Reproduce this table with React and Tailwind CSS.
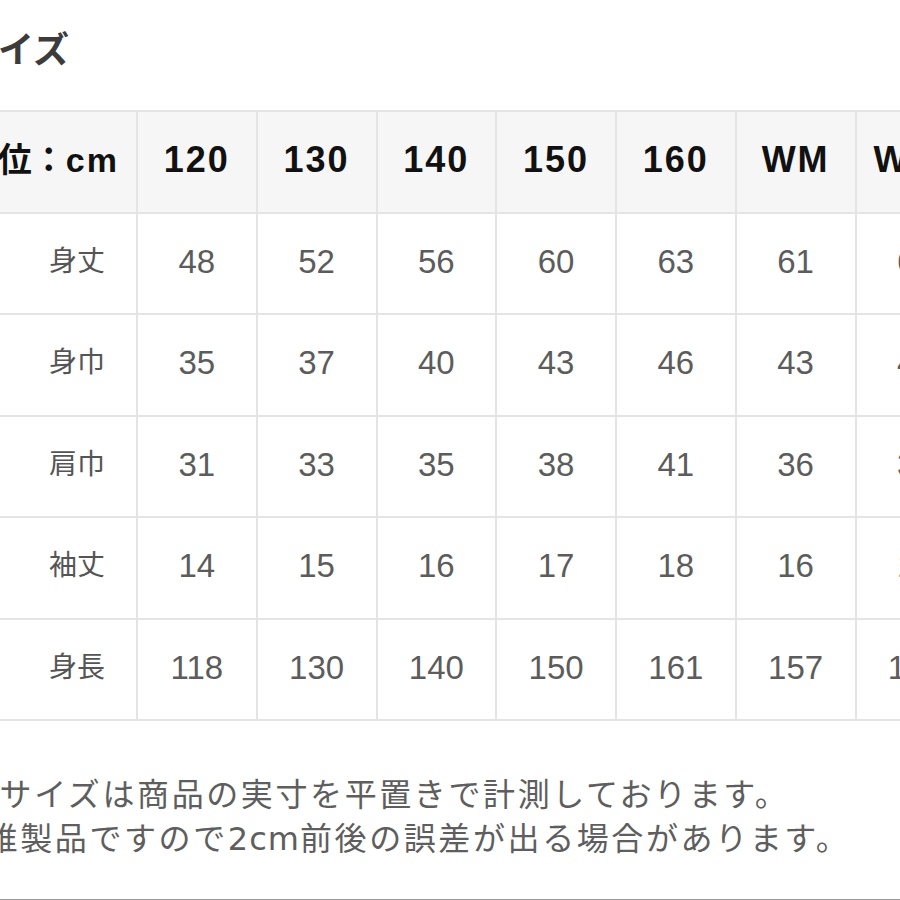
import React from "react";

const sizes = ["120", "130", "140", "150", "160", "WM", "WLL"];
const rows = [
  ["身丈", ["48", "52", "56", "60", "63", "61", "65"]],
  ["身巾", ["35", "37", "40", "43", "46", "43", "46"]],
  ["肩巾", ["31", "33", "35", "38", "41", "36", "38"]],
  ["袖丈", ["14", "15", "16", "17", "18", "16", "17"]],
  ["身長", ["118", "130", "140", "150", "161", "157", "163"]],
];

const font = { fontFamily: '"Liberation Sans", "Noto Sans CJK JP", sans-serif' };

export default function App() {
  return (
    <div
      className="w-[900px] h-[900px] overflow-hidden bg-white border-b border-[#9a9a9a]"
      style={font}
    >
      <div className="ml-[-38px] pt-[27px] text-[36px] font-bold leading-[48px] text-[#3c3c3c] whitespace-nowrap">
        サイズ
      </div>

      <div className="mt-[35px] ml-[-64px] w-max grid grid-cols-[198px_repeat(7,117.75px)] gap-[2px] p-[2px] bg-[#e4e4e4]">
        <div className="h-[99.5px] pb-[3px] bg-[#f6f6f6] flex items-center justify-end pr-[17px] text-[34px] font-bold text-[#111] whitespace-nowrap">
          単位：<span className="tracking-[2px]">cm</span>
        </div>
        {sizes.map((s) => (
          <div
            key={s}
            className="h-[99.5px] pb-[3px] bg-[#f6f6f6] flex items-center justify-center text-[36px] font-bold tracking-[2px] text-[#111] whitespace-nowrap"
          >
            {s}
          </div>
        ))}
        {rows.map(([label, vals]) => (
          <React.Fragment key={label}>
            <div className="h-[99.5px] pb-[3px] bg-white flex items-center justify-end pr-[31px] text-[28px] text-[#555]">
              {label}
            </div>
            {vals.map((v, i) => (
              <div
                key={i}
                className="h-[99.5px] pb-[4px] bg-white flex items-center justify-center text-[33px] text-[#5c5c5c]"
              >
                {v}
              </div>
            ))}
          </React.Fragment>
        ))}
      </div>

      <div className="mt-[52px] text-[32px] leading-[44px] tracking-[2.6px] text-[#5e5e5e] whitespace-nowrap">
        <div className="ml-[-35px]">※サイズは商品の実寸を平置きで計測しております。</div>
        <div className="ml-[-49px]">
          繊維製品ですので
          <span className="tracking-[1px]" style={{ fontFamily: '"DejaVu Sans", sans-serif' }}>
            2cm
          </span>
          前後の誤差が出る場合があります。
        </div>
      </div>
    </div>
  );
}
